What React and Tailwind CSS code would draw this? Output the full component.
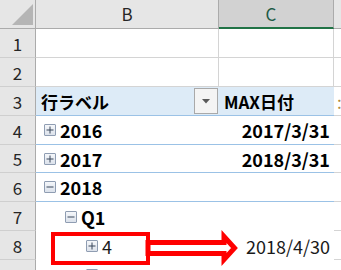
import React from 'react';

const font = "font-['Noto_Sans_CJK_JP',sans-serif]";

const Toggle = ({ open }) => (
    <span className="inline-flex w-[12px] h-[12px] shrink-0 border border-[#8f9db2] rounded-[1px] bg-gradient-to-b from-[#f5f7fa] to-[#dce2eb] items-center justify-center">
        <svg width="10" height="10" viewBox="0 0 10 10">
            <path d="M1.5 5h7" stroke="#38465a" strokeWidth="1" />
            {!open && <path d="M5 1.5v7" stroke="#38465a" strokeWidth="1" />}
        </svg>
    </span>
);

const RowHead = ({ n, h = 'h-[29px]' }) => (
    <div className={`w-[36px] ${h} shrink-0 bg-[#e6e6e6] border-r border-b border-r-[#ababab] border-b-[#cfcfcf] flex items-center justify-center text-[17px] text-[#262626]`}>
        {n}
    </div>
);

const Row = ({ n, h, b, c, bClass = '', cClass = '', line = '' }) => (
    <div className="flex">
        <RowHead n={n} h={h} />
        <div className={`w-[183px] ${h} shrink-0 flex items-center ${line} ${bClass}`}>{b}</div>
        <div className={`w-[115px] ${h} shrink-0 flex items-center ${line} ${cClass}`}>{c}</div>
        <div className={`w-[7px] ${h} shrink-0 border-b border-[#d4d4d4]`} />
    </div>
);

const App = () => {
    return (
        <div className={`relative w-[341px] h-[270px] overflow-hidden bg-white text-black ${font} leading-none`}>
            {/* Column headers */}
            <div className="flex h-[29px]">
                <div className="w-[36px] h-[29px] shrink-0 bg-[#e6e6e6] border-r border-b border-[#ababab] relative">
                    <svg className="absolute left-[12px] top-[4px]" width="22" height="22" viewBox="0 0 22 22">
                        <polygon points="21,0 21,21 0,21" fill="#b5b5b5" />
                    </svg>
                </div>
                <div className="w-[183px] h-[29px] shrink-0 bg-[#e6e6e6] border-r border-b border-[#ababab] flex items-center justify-center text-[17px] text-[#262626] pb-[1px]">
                    B
                </div>
                <div className="w-[115px] h-[29px] shrink-0 bg-[#d2d2d2] border-r border-r-[#ababab] border-b-2 border-b-[#217346] flex items-center justify-center text-[17px] text-[#1d5a46] pr-[10px]">
                    C
                </div>
                <div className="w-[7px] h-[29px] shrink-0 bg-[#e6e6e6] border-b border-[#ababab]" />
            </div>

            <Row n="1" h="h-[29px]" line="border-b border-[#d4d4d4]" bClass="border-r border-r-[#d4d4d4]" cClass="border-r border-r-[#d4d4d4]" />
            <Row n="2" h="h-[29px]" line="border-b border-[#d4d4d4]" bClass="border-r border-r-[#d4d4d4]" cClass="border-r border-r-[#d4d4d4]" />

            {/* Pivot header */}
            <div className="flex">
                <RowHead n="3" />
                <div className="w-[183px] h-[29px] shrink-0 bg-[#ddebf7] border-b border-[#9bc2e6] flex items-center justify-between pl-[5px] pr-[1px]">
                    <span className="text-[17px] font-bold">行ラベル</span>
                    <span className="w-[24px] h-[26px] border border-[#a9a9a9] bg-[#f4f4f4] flex items-center justify-center">
                        <svg width="8" height="5" viewBox="0 0 8 5">
                            <polygon points="0,0 8,0 4,4.5" fill="#5a5a5a" />
                        </svg>
                    </span>
                </div>
                <div className="w-[115px] h-[29px] shrink-0 bg-[#ddebf7] border-b border-[#9bc2e6] flex items-center pl-[5px]">
                    <span className="text-[17px] font-bold">MAX日付</span>
                </div>
                <div className="w-[7px] h-[29px] shrink-0 border-b border-[#d4d4d4] flex items-center overflow-hidden">
                    <span className="text-[17px] text-[#b08a3c] pl-[3px]">:</span>
                </div>
            </div>

            <Row
                n="4" h="h-[29px]" line="border-b border-[#9bc2e6]"
                b={<div className="flex items-center gap-[4px] pl-[8px]"><Toggle /><span className="text-[18px] font-bold">2016</span></div>}
                c={<span className="ml-auto pr-[4px] text-[18px] font-bold">2017/3/31</span>}
            />
            <Row
                n="5" h="h-[28px]" line="border-b border-[#9bc2e6]"
                b={<div className="flex items-center gap-[4px] pl-[8px]"><Toggle /><span className="text-[18px] font-bold">2017</span></div>}
                c={<span className="ml-auto pr-[4px] text-[18px] font-bold">2018/3/31</span>}
            />
            <Row
                n="6" h="h-[29px]" line="border-b border-[#9bc2e6]"
                b={<div className="flex items-center gap-[4px] pl-[8px]"><Toggle open /><span className="text-[18px] font-bold">2018</span></div>}
            />
            <Row
                n="7" h="h-[29px]"
                b={<div className="flex items-center gap-[4px] pl-[29px]"><Toggle open /><span className="text-[18px] font-bold">Q1</span></div>}
            />
            <Row
                n="8" h="h-[29px]"
                b={<div className="flex items-center gap-[4px] pl-[50px]"><Toggle /><span className="text-[18px] text-[#1a1a1a]">4</span></div>}
                c={<span className="ml-auto pr-[4px] text-[18px] text-[#1a1a1a]">2018/4/30</span>}
            />
            <Row
                n=""
                h="h-[29px]"
                b={<div className="flex items-center pl-[50px]"><Toggle /></div>}
            />

            {/* Highlight box and arrow */}
            <div className="absolute left-[51px] top-[232px] w-[99px] h-[33px] border-[4px] border-[#ff0000]" />
            <svg className="absolute left-[140px] top-[228px]" width="110" height="40" viewBox="0 0 110 40">
                <polygon
                    points="8,14.5 84,14.5 84,8.5 94.5,20 84,31.5 84,25.5 8,25.5"
                    fill="#ffffff"
                    stroke="#ff0000"
                    strokeWidth="5"
                    strokeLinejoin="miter"
                />
            </svg>
        </div>
    );
};

export default App;
